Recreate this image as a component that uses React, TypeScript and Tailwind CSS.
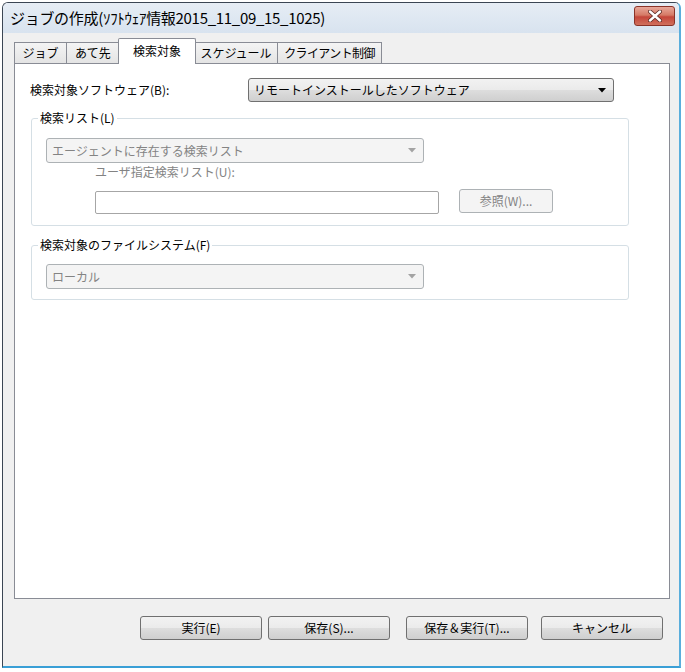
import React from "react";

const btnFace =
    "bg-[linear-gradient(to_bottom,#f2f2f2_0%,#ebebeb_48%,#dddddd_52%,#cfcfcf_100%)] border border-[#707070] rounded-[3px]";

function Arrow({ color }: { color: string }) {
    return (
        <svg width="8" height="5" viewBox="0 0 8 5">
            <polygon points="0,0 8,0 4,4.5" fill={color} />
        </svg>
    );
}

function Combo({
    text,
    disabled,
    className,
}: {
    text: string;
    disabled?: boolean;
    className: string;
}) {
    return (
        <div
            className={`${className} flex items-center justify-between pl-[5px] pr-[7px] rounded-[3px] ${
                disabled
                    ? "bg-[#f4f4f4] border border-[#adb2b5] text-[#838383]"
                    : btnFace + " text-black"
            }`}
        >
            <span className="leading-none">{text}</span>
            <Arrow color={disabled ? "#a3a3a3" : "#000"} />
        </div>
    );
}

function Tab({
    label,
    className,
    active,
}: {
    label: string;
    className: string;
    active?: boolean;
}) {
    return (
        <div
            className={`${className} flex items-center justify-center border border-b-0 border-[#898c95] ${
                active
                    ? "relative z-10 h-[26px] -mb-px bg-white rounded-t-[2px]"
                    : "h-[21px] bg-[linear-gradient(to_bottom,#f4f4f4,#e4e4e4)]"
            }`}
        >
            <span className={`leading-none ${active ? "-mt-[2px]" : ""}`}>{label}</span>
        </div>
    );
}

function Button({ label, className }: { label: string; className: string }) {
    return (
        <button
            className={`${className} ${btnFace} h-[24px] w-[122px] flex items-center justify-center text-black`}
        >
            {label}
        </button>
    );
}

export default function App() {
    return (
        <div className="w-[685px] h-[672px] bg-white pt-[2px] pl-[2px] font-['Noto_Sans_CJK_JP',sans-serif] text-[12px] text-black">
            <div className="w-[679px] h-[666px] flex flex-col border-l border-t border-[#3b4654] border-r-2 border-r-[#5aaedc] border-b-2 border-b-[#3a9fd6] rounded-t-[6px] overflow-hidden">
                {/* title bar */}
                <div className="h-[30px] flex items-center justify-between pl-[7px] pr-[4px] bg-[linear-gradient(to_bottom,#e6edf5,#d8e3ef)]">
                    <span className="text-[15px] leading-none tracking-[-0.3px] -mt-[2px]">
                        ジョブの作成(ｿﾌﾄｳｪｱ情報2015_11_09_15_1025)
                    </span>
                    <div className="w-[41px] h-[20px] -mt-[4px] flex items-center justify-center rounded-[3px] border border-[#8a3328] bg-[linear-gradient(to_bottom,#e8a89a_0%,#d57a66_45%,#c4463a_55%,#d0705c_100%)]">
                        <svg width="14" height="12" viewBox="0 0 14 12">
                            <path
                                d="M2 1.5 L12 10.5 M12 1.5 L2 10.5"
                                stroke="#5a2a24"
                                strokeWidth="4"
                                strokeLinecap="round"
                            />
                            <path
                                d="M2 1.5 L12 10.5 M12 1.5 L2 10.5"
                                stroke="#ffffff"
                                strokeWidth="2.4"
                                strokeLinecap="round"
                            />
                        </svg>
                    </div>
                </div>

                {/* body */}
                <div className="flex-1 flex flex-col bg-[#f0f0f0] pl-[11px] pr-[9px] pt-[5px]">
                    <div className="h-[25px] flex items-end">
                        <Tab label="ジョブ" className="w-[53px]" />
                        <Tab label="あて先" className="w-[54px] -ml-px" />
                        <Tab label="検索対象" className="w-[78px] -ml-[2px]" active />
                        <Tab label="スケジュール" className="w-[84px] -ml-[2px]" />
                        <Tab label="クライアント制御" className="w-[105px] -ml-px tracking-[-0.6px]" />
                    </div>

                    <div className="h-[536px] bg-white border border-[#898c95] flex flex-col">
                        <div className="flex items-center pl-[15px] pt-[14px]">
                            <span className="w-[218px]">検索対象ソフトウェア(B):</span>
                            <Combo
                                text="リモートインストールしたソフトウェア"
                                className="w-[366px] h-[24px]"
                            />
                        </div>

                        <fieldset className="ml-[16px] mt-[9px] w-[598px] border border-[#d5dfe5] rounded-[3px] pb-[11px]">
                            <legend className="ml-[6px] px-[2px] leading-[14px]">検索リスト(L)</legend>
                            <div className="pl-[14px] flex flex-col">
                                <Combo
                                    text="エージェントに存在する検索リスト"
                                    disabled
                                    className="w-[378px] h-[25px] mt-[13px]"
                                />
                                <span className="ml-[49px] mt-[2px] leading-[14px] text-[#838383]">
                                    ユーザ指定検索リスト(U):
                                </span>
                                <div className="flex items-start mt-[10px] ml-[49px]">
                                    <div className="w-[344px] h-[23px] mt-[2px] bg-white border border-[#a6a6a6] rounded-[2px]" />
                                    <div className="ml-[20px] w-[94px] h-[24px] flex items-center justify-center bg-[#f4f4f4] border border-[#adb2b5] rounded-[3px] text-[#838383]">
                                        参照(W)...
                                    </div>
                                </div>
                            </div>
                        </fieldset>

                        <fieldset className="ml-[16px] mt-[12px] w-[598px] border border-[#d5dfe5] rounded-[3px] pb-[10px]">
                            <legend className="ml-[6px] px-[2px] leading-[14px]">
                                検索対象のファイルシステム(F)
                            </legend>
                            <div className="pl-[14px] flex flex-col">
                                <Combo
                                    text="ローカル"
                                    disabled
                                    className="w-[378px] h-[25px] mt-[12px]"
                                />
                            </div>
                        </fieldset>
                    </div>

                    <div className="flex mt-[17px] ml-[126px]">
                        <Button label="実行(E)" className="" />
                        <Button label="保存(S)..." className="ml-[6px]" />
                        <Button label="保存＆実行(T)..." className="ml-[16px]" />
                        <Button label="キャンセル" className="ml-[13px]" />
                    </div>
                </div>
            </div>
        </div>
    );
}
